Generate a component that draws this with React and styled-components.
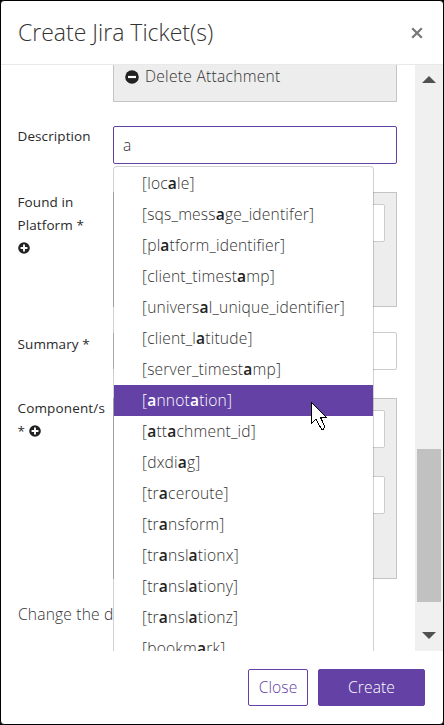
import React from "react";
import styled, { createGlobalStyle } from "styled-components";

const Global = createGlobalStyle`
  * { box-sizing: border-box; }
  body { margin: 0; background: #000; }
`;
const Dialog = styled.div`
  width: 444px;
  height: 725px;
  border: 1px solid #000;
  border-radius: 4px;
  background: #fff;
  display: flex;
  flex-direction: column;
  font: 300 15.6px/23px "Open Sans", "Noto Sans", sans-serif;
  letter-spacing: 0.18px;
  color: #333;
`;
const Header = styled.header`
  height: 64px;
  flex: none;
  border-bottom: 1px solid #e9e9e9;
  display: flex;
  align-items: center;
  justify-content: space-between;
  padding: 0 20px 0 17px;
`;
const Title = styled.h1`
  margin: 0 0 2px;
  font-size: 23px;
  font-weight: 300;
  line-height: 32px;
  letter-spacing: 0;
`;
const CloseIcon = styled.svg`
  width: 12px;
  height: 12px;
  stroke: #777;
  stroke-width: 2.4;
`;
const Body = styled.main`
  height: 586px;
  flex: none;
  display: flex;
  overflow: hidden;
`;
const Form = styled.div`
  flex: 1;
  position: relative;
  padding: 0 18px 0 17px;
`;
const Row = styled.div`
  display: grid;
  grid-template-columns: 95px 284px;
  height: ${(p) => p.$height}px;
`;
const Label = styled.label`
  font-size: 13.5px;
  font-weight: 400;
  letter-spacing: ${(p) => p.$spacing || 0.1}px;
  color: #2a2a2a;
  margin: ${(p) => p.$top ?? -1}px 0 0 -0.5px;
  svg { display: inline-block; vertical-align: -1px; }
`;
const Panel = styled.div`
  height: ${(p) => p.$height}px;
  border: 1px solid #c4c4c4;
  background: #ededed;
  padding: 11px;
  display: flex;
  flex-direction: column;
  gap: 28px;
`;
const AttachmentPanel = styled(Panel)`
  border-top: 0;
  padding: 0 11px;
`;
const DeleteLink = styled.div`
  display: flex;
  align-items: center;
  gap: 6px;
  height: 23px;
  letter-spacing: 0.27px;
`;
const Field = styled.input`
  width: 100%;
  height: 38px;
  flex: none;
  border: 1px solid ${(p) => (p.$active ? "#6441a5" : "#ccc")};
  border-radius: 2px;
  background: #fff;
  padding: 0 9px;
  font: inherit;
  color: #333;
  outline: 0;
`;
const Note = styled.div`
  white-space: nowrap;
`;
const Menu = styled.ul`
  position: absolute;
  z-index: 1;
  left: 112px;
  top: 101px;
  width: 261px;
  margin: 0;
  padding: 1px 0;
  list-style: none;
  background: #fff;
  background-clip: padding-box;
  border: 1px solid rgba(0, 0, 0, 0.18);
  border-radius: 4px;
`;
const Item = styled.li`
  height: 31px;
  line-height: 30px;
  padding-left: 28px;
  white-space: nowrap;
  color: ${(p) => (p.$active ? "#fff" : "#333")};
  background: ${(p) => (p.$active ? "#6441a5" : "transparent")};
  b { font-weight: 600; color: ${(p) => (p.$active ? "#fff" : "#222")}; }
`;
const Scrollbar = styled.div`
  width: 28px;
  background: #f0f0f0;
  display: flex;
  flex-direction: column;
  align-items: center;
  padding: 11px 0;
`;
const Arrow = styled.svg`
  width: 14px;
  height: 7px;
  fill: #505050;
  flex: none;
`;
const Thumb = styled.div`
  width: 24px;
  height: 153px;
  margin: 366px 0 30px;
  background: #c1c1c1;
  flex: none;
`;
const Footer = styled.footer`
  flex: 1;
  display: flex;
  justify-content: flex-end;
  padding: 18px 18px 0 0;
  gap: 10px;
`;
const Button = styled.button`
  width: ${(p) => p.$width}px;
  height: 37px;
  padding: 0;
  border: 1px solid #6441a5;
  border-radius: 2px;
  font: inherit;
  letter-spacing: 0.1px;
  background: ${(p) => (p.$primary ? "#6441a5" : "#fff")};
  color: ${(p) => (p.$primary ? "#fff" : "#6441a5")};
`;
const Cursor = styled.svg`
  position: absolute;
  z-index: 2;
  left: 310px;
  top: 337px;
  width: 17px;
  height: 28px;
`;

const RoundSign = ({ size, plus }) => (
  <svg width={size} height={size} viewBox="0 0 14 14">
    <circle cx="7" cy="7" r="6.8" fill="#222" />
    <path d={plus ? "M3 7H11M7 3V11" : "M3 7H11"} stroke="#fff" strokeWidth="2.2" />
  </svg>
);

const items = [
  "locale", "sqs_message_identifer", "platform_identifier", "client_timestamp",
  "universal_unique_identifier", "client_latitude", "server_timestamp", "annotation",
  "attachment_id", "dxdiag", "traceroute", "transform", "translationx",
  "translationy", "translationz", "bookmark",
];
const highlight = (name) =>
  [...name].map((c, i) => (c === "a" ? <b key={i}>a</b> : c));

export default function App() {
  return (
    <Dialog>
      <Global />
      <Header>
        <Title>Create Jira Ticket(s)</Title>
        <CloseIcon viewBox="0 0 13 13"><path d="M1.3 1.3 11.7 11.7M11.7 1.3 1.3 11.7" /></CloseIcon>
      </Header>
      <Body>
        <Form>
          <Row $height={61}>
            <span />
            <AttachmentPanel $height={37}>
              <DeleteLink><RoundSign size={14} />Delete Attachment</DeleteLink>
            </AttachmentPanel>
          </Row>
          <Row $height={66}>
            <Label>Description</Label>
            <Field $active defaultValue="a" />
          </Row>
          <Row $height={140}>
            <Label>Found in<br />Platform *<br /><RoundSign size={12} plus /></Label>
            <Panel $height={115}><Field /></Panel>
          </Row>
          <Row $height={66}>
            <Label $top={1}>Summary *</Label>
            <Field />
          </Row>
          <Row $height={205}>
            <Label $spacing={0.15}>Component/s<br />* <RoundSign size={12} plus /></Label>
            <Panel $height={181}><Field /><Field /></Panel>
          </Row>
          <Note>Change the d</Note>
          <Menu>
            {items.map((n) => (
              <Item key={n} $active={n === "annotation"}>[{highlight(n)}]</Item>
            ))}
          </Menu>
          <Cursor viewBox="0 0 17 28">
            <path d="M.5 .5V21.500L5 17L6.500 20L10.500 27L12.500 27L14 25L9.800 16V15.500H15.500Z" fill="#fff" stroke="#000" shapeRendering="crispEdges" />
          </Cursor>
        </Form>
        <Scrollbar>
          <Arrow viewBox="0 0 14 7"><path d="M0 7 7 0 14 7Z" /></Arrow>
          <Thumb />
          <Arrow viewBox="0 0 14 7"><path d="M0 0 7 7 14 0Z" /></Arrow>
        </Scrollbar>
      </Body>
      <Footer>
        <Button $width={60}>Close</Button>
        <Button $primary $width={107}>Create</Button>
      </Footer>
    </Dialog>
  );
}
